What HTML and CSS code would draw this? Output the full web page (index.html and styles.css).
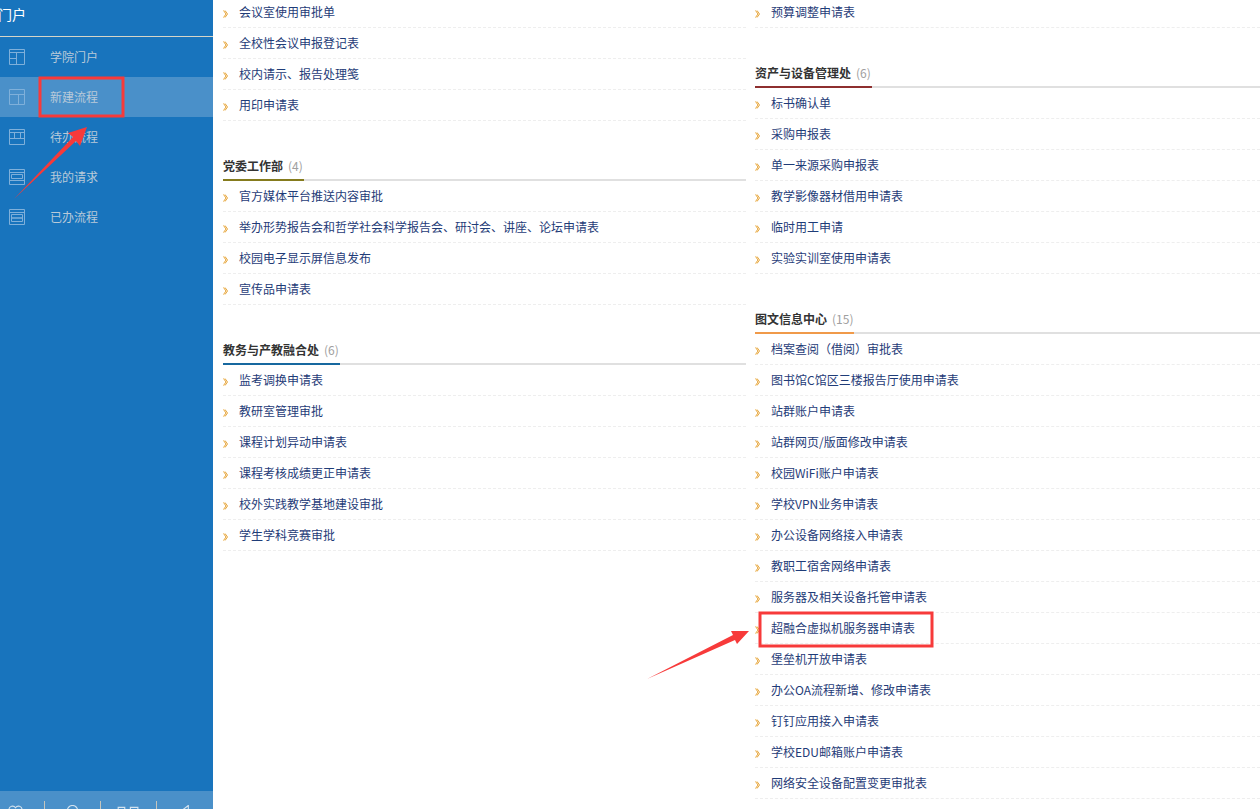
FILE: index.html
```html
<!DOCTYPE html>
<html lang="zh-CN">
<head>
<meta charset="utf-8">
<title>新建流程</title>
<link rel="stylesheet" href="styles.css">
</head>
<body>
<svg class="defs" width="0" height="0" aria-hidden="true">
  <symbol id="chev" viewBox="0 0 5 8"><path d="M.5.5 3 4 .5 7.500M2 .5 4.500 4 2 7.500" fill="none" stroke="#e6a437" stroke-width="1"/></symbol>
</svg>
<div class="app">
  <aside class="side">
    <div class="brand">门户</div>
    <nav class="nav">
      <a class="nav-item"><svg class="nav-icon" viewBox="0 0 16 16"><path d="M.5.5h15v15H.5zM.5 3.500h15M7.500 3.500v12M.5 9.500h7"/></svg><span>学院门户</span></a>
      <a class="nav-item active"><svg class="nav-icon" viewBox="0 0 16 16"><path d="M.5.5h15v15H.5zM.5 5.500h15M9.500 5.500v10"/></svg><span>新建流程</span></a>
      <a class="nav-item"><svg class="nav-icon" viewBox="0 0 16 16"><path d="M.5.5h15v15H.5zM.5 3.500h15M.5 9.500h15M5.500 3.500v6M11.500 3.500v6"/></svg><span>待办流程</span></a>
      <a class="nav-item"><svg class="nav-icon" viewBox="0 0 16 16"><path d="M.5.5h15v15H.5zM.5 3.500h15M2.500 5.500h11v4h-11zM.5 11.500h15"/></svg><span>我的请求</span></a>
      <a class="nav-item"><svg class="nav-icon" viewBox="0 0 16 16"><path d="M.5.5h15v15H.5zM.5 3.500h15M2.500 5.500h11v3.500h-11zM2.500 9h11v3.500h-11z"/></svg><span>已办流程</span></a>
    </nav>
    <div class="foot">
      <div class="foot-cell first"><svg class="foot-icon" viewBox="0 0 16 16"><path d="M1 5C1 1 6 0 8 3 10 0 15 1 15 5S10 12 8 14C6 12 1 9 1 5Z"/></svg></div>
      <div class="foot-cell"><svg class="foot-icon" viewBox="0 0 16 16"><circle cx="8" cy="6" r="5.500"/></svg></div>
      <div class="foot-cell"><svg class="foot-icon wide" viewBox="0 0 24 16"><path d="M1 2.500h7v7H1zM14 2.500h8v7h-8z"/></svg></div>
      <div class="foot-cell"><svg class="foot-icon" viewBox="0 0 16 16"><path d="M11 .5V14L2 7.500Z"/></svg></div>
    </div>
  </aside>
  <main class="main">
    <div class="col">
      <section class="group first">
        <ul class="list">
          <li><svg class="chev"><use href="#chev"/></svg>会议室使用审批单</li>
          <li><svg class="chev"><use href="#chev"/></svg>全校性会议申报登记表</li>
          <li><svg class="chev"><use href="#chev"/></svg>校内请示、报告处理笺</li>
          <li><svg class="chev"><use href="#chev"/></svg>用印申请表</li>
        </ul>
      </section>
      <section class="group">
        <h3 class="head"><span class="head-label olive">党委工作部<em>(4)</em></span></h3>
        <ul class="list">
          <li><svg class="chev"><use href="#chev"/></svg>官方媒体平台推送内容审批</li>
          <li><svg class="chev"><use href="#chev"/></svg>举办形势报告会和哲学社会科学报告会、研讨会、讲座、论坛申请表</li>
          <li><svg class="chev"><use href="#chev"/></svg>校园电子显示屏信息发布</li>
          <li><svg class="chev"><use href="#chev"/></svg>宣传品申请表</li>
        </ul>
      </section>
      <section class="group">
        <h3 class="head"><span class="head-label blue">教务与产教融合处<em>(6)</em></span></h3>
        <ul class="list">
          <li><svg class="chev"><use href="#chev"/></svg>监考调换申请表</li>
          <li><svg class="chev"><use href="#chev"/></svg>教研室管理审批</li>
          <li><svg class="chev"><use href="#chev"/></svg>课程计划异动申请表</li>
          <li><svg class="chev"><use href="#chev"/></svg>课程考核成绩更正申请表</li>
          <li><svg class="chev"><use href="#chev"/></svg>校外实践教学基地建设审批</li>
          <li><svg class="chev"><use href="#chev"/></svg>学生学科竞赛审批</li>
        </ul>
      </section>
    </div>
    <div class="col">
      <section class="group first">
        <ul class="list">
          <li><svg class="chev"><use href="#chev"/></svg>预算调整申请表</li>
        </ul>
      </section>
      <section class="group">
        <h3 class="head"><span class="head-label red">资产与设备管理处<em>(6)</em></span></h3>
        <ul class="list">
          <li><svg class="chev"><use href="#chev"/></svg>标书确认单</li>
          <li><svg class="chev"><use href="#chev"/></svg>采购申报表</li>
          <li><svg class="chev"><use href="#chev"/></svg>单一来源采购申报表</li>
          <li><svg class="chev"><use href="#chev"/></svg>教学影像器材借用申请表</li>
          <li><svg class="chev"><use href="#chev"/></svg>临时用工申请</li>
          <li><svg class="chev"><use href="#chev"/></svg>实验实训室使用申请表</li>
        </ul>
      </section>
      <section class="group">
        <h3 class="head"><span class="head-label orange">图文信息中心<em>(15)</em></span></h3>
        <ul class="list">
          <li><svg class="chev"><use href="#chev"/></svg>档案查阅（借阅）审批表</li>
          <li><svg class="chev"><use href="#chev"/></svg>图书馆C馆区三楼报告厅使用申请表</li>
          <li><svg class="chev"><use href="#chev"/></svg>站群账户申请表</li>
          <li><svg class="chev"><use href="#chev"/></svg>站群网页/版面修改申请表</li>
          <li><svg class="chev"><use href="#chev"/></svg>校园WiFi账户申请表</li>
          <li><svg class="chev"><use href="#chev"/></svg>学校VPN业务申请表</li>
          <li><svg class="chev"><use href="#chev"/></svg>办公设备网络接入申请表</li>
          <li><svg class="chev"><use href="#chev"/></svg>教职工宿舍网络申请表</li>
          <li><svg class="chev"><use href="#chev"/></svg>服务器及相关设备托管申请表</li>
          <li><svg class="chev"><use href="#chev"/></svg>超融合虚拟机服务器申请表</li>
          <li><svg class="chev"><use href="#chev"/></svg>堡垒机开放申请表</li>
          <li><svg class="chev"><use href="#chev"/></svg>办公OA流程新增、修改申请表</li>
          <li><svg class="chev"><use href="#chev"/></svg>钉钉应用接入申请表</li>
          <li><svg class="chev"><use href="#chev"/></svg>学校EDU邮箱账户申请表</li>
          <li><svg class="chev"><use href="#chev"/></svg>网络安全设备配置变更审批表</li>
        </ul>
      </section>
    </div>
  </main>
</div>
<svg class="marks" viewBox="0 0 1260 809" aria-hidden="true">
  <rect class="mark-box" x="40" y="78" width="83" height="38"/>
  <rect class="mark-box" x="760" y="613" width="172" height="33"/>
  <path class="mark-arrow" d="M14 199 73 137 68 133 87 127 80 146 76 141Z"/>
  <path class="mark-arrow" d="M647 679 733 635 731 631 749 631 737 644 735 640Z"/>
</svg>
</body>
</html>
```

FILE: styles.css
```css
* { box-sizing: border-box; }
html, body { margin: 0; height: 100%; overflow: hidden; background: #fff; }
body { font-family: "Noto Sans CJK SC", "Liberation Sans", sans-serif; font-size: 12px; }
.defs { position: absolute; }
.app { display: flex; height: 809px; }

.side { flex: 0 0 213px; display: flex; flex-direction: column; background: #1874bd; overflow: hidden; }
.brand { height: 37px; border-bottom: 1px solid #d5d5c8; color: #fff; font-size: 14px; line-height: 28px; text-indent: -2px; }
.nav { flex: 1; }
.nav-item { display: flex; align-items: center; height: 40px; padding-left: 9px; color: #b9cad9; line-height: 40px; }
.nav-item.active { background: #4a90c9; }
.nav-icon { flex: none; width: 16px; height: 16px; margin-right: 25px; fill: none; stroke: #7fb0da; stroke-width: 1; }
.foot { display: flex; height: 18px; background: #4a90c9; padding-top: 10px; }
.foot-cell { width: 56px; height: 8px; border-right: 1px solid #c5c5bd; overflow: hidden; display: flex; justify-content: center; padding-top: 4px; }
.foot-cell.first { width: 45px; justify-content: flex-start; padding-left: 8px; }
.foot-cell:last-child { border-right: 0; }
.foot-icon { flex: none; width: 15px; height: 15px; fill: none; stroke: #d3e2ef; stroke-width: 1.2; }
.foot-icon.wide { width: 23px; }

.main { flex: 1; min-width: 0; display: flex; gap: 9px; margin-top: -3px; padding-left: 10px; overflow: hidden; }
.col { flex: 0 0 523px; }
.col + .col { flex: 1 0 0; min-width: 505px; }
.group { margin-top: 30px; }
.group.first { margin-top: 0; }
.head { display: flex; height: 30px; margin: 0; border-bottom: 2px solid #e0e0e0; font-size: 12px; font-weight: 700; color: #333; line-height: 30px; }
.head-label { height: 30px; padding-right: 1px; border-bottom: 2px solid; }
.head-label em { margin-left: 5px; font-style: normal; font-weight: 400; color: #a0a0a0; }
.olive { border-color: #857b1d; }
.blue { border-color: #17689f; }
.red { border-color: #8e2f2f; }
.orange { border-color: #f09a4a; }
.list { margin: 0; padding: 0; list-style: none; }
.list li { display: flex; align-items: center; height: 31px; padding-bottom: 2px; border-bottom: 1px dashed #eee; color: #1f3c78; white-space: nowrap; }
.chev { flex: none; width: 5px; height: 8px; margin: 6px 11px 0 0; }

.marks { position: absolute; left: 0; top: 0; width: 1260px; height: 809px; pointer-events: none; }
.mark-box { fill: none; stroke: #f73a3a; stroke-width: 3; }
.mark-arrow { fill: #f73a3a; }
```
